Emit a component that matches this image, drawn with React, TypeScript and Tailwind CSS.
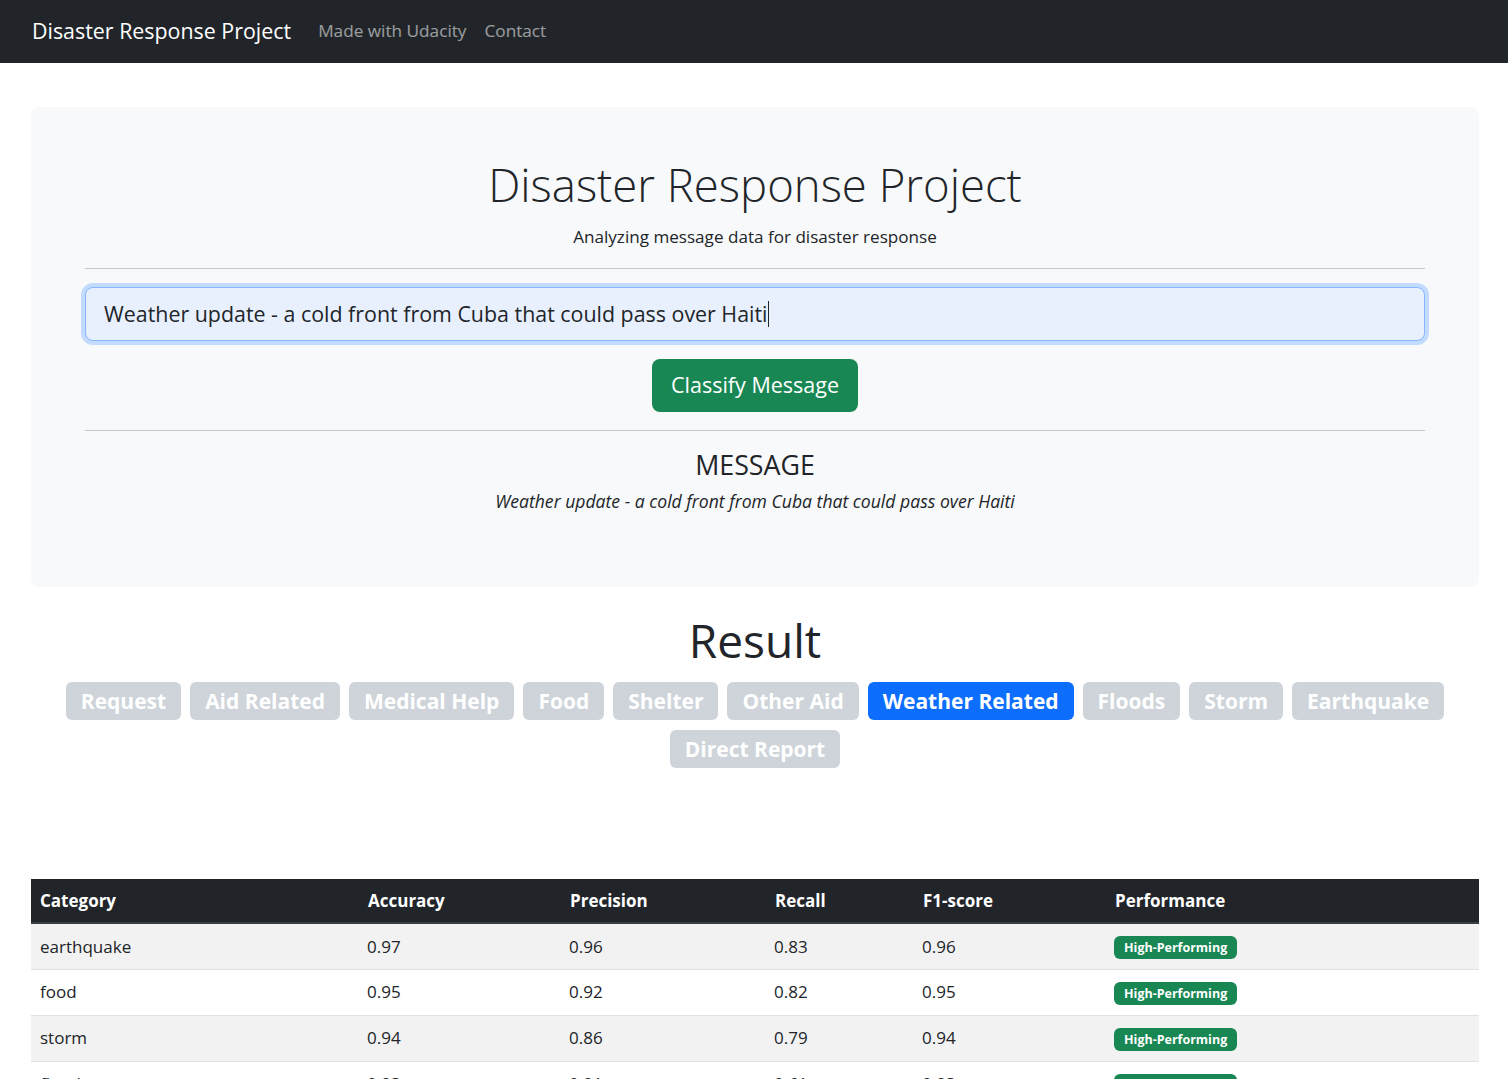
import React from 'react';

/* Disaster Response Project – classifier page (navbar, hero form, result badges, metrics table) */

const FONT = { fontFamily: '"Open Sans", "Noto Sans", sans-serif' };

const CATEGORIES = [
  'Request', 'Aid Related', 'Medical Help', 'Food', 'Shelter', 'Other Aid',
  'Weather Related', 'Floods', 'Storm', 'Earthquake', 'Direct Report',
];
const ACTIVE = ['Weather Related'];

const ROWS = [
  { cat: 'earthquake', acc: '0.97', prec: '0.96', rec: '0.83', f1: '0.96' },
  { cat: 'food',       acc: '0.95', prec: '0.92', rec: '0.82', f1: '0.95' },
  { cat: 'storm',      acc: '0.94', prec: '0.86', rec: '0.79', f1: '0.94' },
  { cat: 'floods',     acc: '0.93', prec: '0.91', rec: '0.61', f1: '0.93' },
  { cat: 'shelter',    acc: '0.93', prec: '0.86', rec: '0.54', f1: '0.92' },
];

function Navbar() {
  return (
    <nav className="h-[63px] bg-[#212529] flex items-center pl-[32px]">
      <span className="text-[21.4px] text-white mr-[19px] -mt-[1px]">Disaster Response Project</span>
      <a className="text-[17.2px] text-white/55 px-[8px] -mt-[1px]">Made with Udacity</a>
      <a className="text-[17.2px] text-white/55 px-[8px] ml-[2px] -mt-[1px]">Contact</a>
    </nav>
  );
}

function Hero() {
  const msg = 'Weather update - a cold front from Cuba that could pass over Haiti';
  return (
    <div className="bg-[#f8f9fa] rounded-[8px] px-[54px] pt-[48px] pb-[72px] text-[#212529]">
      <h1 className="text-[45.5px] leading-[58px] font-light text-center">Disaster Response Project</h1>
      <p className="text-[17.1px] leading-[27px] text-center mt-[10px]">Analyzing message data for disaster response</p>
      <hr className="mt-[18px] border-t border-[#c6c7c8]" />
      <div className="mt-[18px] h-[54px] rounded-[8px] border border-[#86b7fe] bg-[#e8f0fe] shadow-[0_0_0_4px_#c2dbfe] flex items-center px-[18px]">
        <span className="text-[21.4px] text-[#212529]">{msg}</span>
        <span className="w-px h-[26px] bg-[#212529] ml-[1px]" />
      </div>
      <div className="flex justify-center mt-[18px]">
        <button className="h-[53px] px-[19px] rounded-[8px] bg-[#198754] text-white text-[21.5px]">Classify Message</button>
      </div>
      <hr className="mt-[18px] border-t border-[#c6c7c8]" />
      <h3 className="text-[26.8px] leading-[34px] text-center mt-[17px] font-normal">MESSAGE</h3>
      <p className="text-[17.6px] leading-[27px] italic text-center mt-[6px]">{msg}</p>
    </div>
  );
}

function Result() {
  return (
    <div className="mt-[25px] text-center">
      <h1 className="text-[46px] leading-[56px] font-medium text-[#212529]">Result</h1>
      <div className="mt-[14px] flex flex-wrap justify-center gap-x-[9px] gap-y-[10px] px-[30px]">
        {CATEGORIES.map(c => (
          <span
            key={c}
            className={`h-[38px] px-[15px] rounded-[6px] text-white text-[21px] font-bold leading-[38px] ${ACTIVE.includes(c) ? 'bg-[#0d6efd]' : 'bg-[#ced4da]'}`}
          >
            {c}
          </span>
        ))}
      </div>
    </div>
  );
}

function MetricsTable() {
  const cols = ['w-[328px]', 'w-[202px]', 'w-[205px]', 'w-[148px]', 'w-[192px]', ''];
  const heads = ['Category', 'Accuracy', 'Precision', 'Recall', 'F1-score', 'Performance'];
  return (
    <table className="w-full mt-[111px] border-collapse text-[17px] text-[#212529] text-left">
      <thead>
        <tr className="bg-[#212529] text-white h-[44px] border-b-2 border-[#3a3f44]">
          {heads.map((h, i) => (
            <th key={h} className={`${cols[i]} px-[9px] font-bold`}>{h}</th>
          ))}
        </tr>
      </thead>
      <tbody>
        {ROWS.map((r, i) => (
          <tr key={r.cat} className={`h-[46px] border-b border-[#dee2e6] ${i % 2 === 0 ? 'bg-[#f2f2f2]' : 'bg-white'}`}>
            <td className="px-[9px]">{r.cat}</td>
            <td className="px-[8px]">{r.acc}</td>
            <td className="px-[8px]">{r.prec}</td>
            <td className="px-[8px]">{r.rec}</td>
            <td className="px-[8px]">{r.f1}</td>
            <td className="px-[8px]">
              <span className="inline-block bg-[#198754] text-white text-[12.5px] font-bold rounded-[6px] px-[10px] leading-[23px]">
                High-Performing
              </span>
            </td>
          </tr>
        ))}
      </tbody>
    </table>
  );
}

export default function App() {
  return (
    <div className="min-h-screen bg-white" style={FONT}>
      <Navbar />
      <div className="pl-[31px] pr-[29px] pt-[44px] pb-[40px]">
        <Hero />
        <Result />
        <MetricsTable />
      </div>
    </div>
  );
}
